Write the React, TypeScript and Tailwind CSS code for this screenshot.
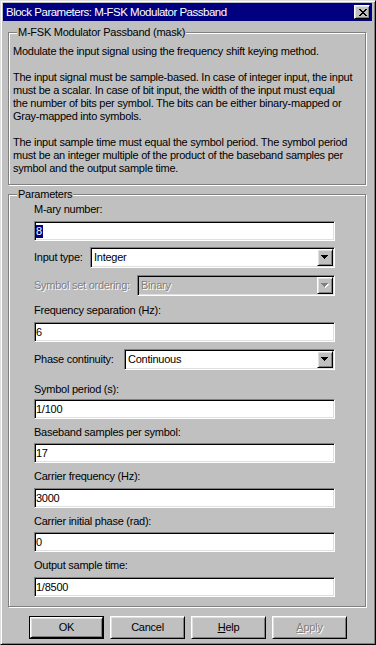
import React from 'react';

// Win classic bevels
const sunken =
  'border border-t-[#808080] border-l-[#808080] border-r-white border-b-white shadow-[inset_1px_1px_0_#000,inset_-1px_-1px_0_#dfdfdf]';
const raised =
  'border border-t-white border-l-white border-r-black border-b-black shadow-[inset_1px_1px_0_#dfdfdf,inset_-1px_-1px_0_#808080]';

const CloseGlyph = () => (
  <svg width="8" height="7" viewBox="0 0 8 7" shapeRendering="crispEdges">
    <path
      d="M0 0h2v1H0zM6 0h2v1H6zM1 1h2v1H1zM5 1h2v1H5zM2 2h4v1H2zM3 3h2v1H3zM2 4h4v1H2zM1 5h2v1H1zM5 5h2v1H5zM0 6h2v1H0zM6 6h2v1H6z"
      fill="#000"
    />
  </svg>
);

const Arrow = ({ disabled }: { disabled?: boolean }) => (
  <svg width="8" height="5" viewBox="0 0 8 5" shapeRendering="crispEdges">
    {disabled && <path d="M1 1h7v1H1zM2 2h5v1H2zM3 3h3v1H3zM4 4h1v1H4z" fill="#fff" />}
    <path d="M0 0h7v1H0zM1 1h5v1H1zM2 2h3v1H2zM3 3h1v1H3z" fill={disabled ? '#808080' : '#000'} />
  </svg>
);

const Edit = ({ value, selected }: { value: string; selected?: boolean }) => (
  <div className={`h-[20px] w-[301px] bg-white ${sunken} flex items-center pl-[1px] leading-[13px] text-black`}>
    {selected ? <span className="bg-[#000080] text-white pr-[1px]">{value}</span> : <span>{value}</span>}
  </div>
);

const Combo = ({ value, className, disabled }: { value: string; className: string; disabled?: boolean }) => (
  <div className={`h-[21px] flex p-[1px] ${sunken} ${disabled ? 'bg-[#c0c0c0]' : 'bg-white'} ${className}`}>
    <div
      className={`flex-1 flex items-center pl-[2px] leading-[13px] ${
        disabled ? 'text-[#808080] [text-shadow:1px_1px_0_#fff]' : 'text-black'
      }`}
    >
      {value}
    </div>
    <div className={`w-[16px] h-full bg-[#c0c0c0] ${raised} flex items-center justify-center`}>
      <Arrow disabled={disabled} />
    </div>
  </div>
);

const Label = ({ children, disabled }: { children: React.ReactNode; disabled?: boolean }) => (
  <div className={`leading-[13px] ${disabled ? 'text-[#808080] [text-shadow:1px_1px_0_#fff]' : 'text-black'}`}>
    {children}
  </div>
);

const GroupBox = ({
  title,
  className,
  children,
}: {
  title: string;
  className: string;
  children: React.ReactNode;
}) => (
  <div className={`relative ml-[5px] w-[358px] border border-[#808080] shadow-[inset_1px_1px_0_#fff,1px_1px_0_#fff] ${className}`}>
    <div className="absolute left-[8px] -top-[7px] px-[1px] bg-[#c0c0c0] leading-[13px] text-black">{title}</div>
    {children}
  </div>
);

const Button = ({
  children,
  isDefault,
  disabled,
}: {
  children: React.ReactNode;
  isDefault?: boolean;
  disabled?: boolean;
}) => {
  const face = (
    <div
      className={`h-full w-full bg-[#c0c0c0] ${raised} flex items-center justify-center leading-[13px] ${
        disabled ? 'text-[#808080] [text-shadow:1px_1px_0_#fff]' : 'text-black'
      }`}
    >
      {children}
    </div>
  );
  return isDefault ? (
    <div className="w-[75px] h-[23px] border border-black">{face}</div>
  ) : (
    <div className="w-[75px] h-[23px]">{face}</div>
  );
};

const App = () => {
  return (
    <div className="w-[376px] h-[645px] bg-[#c0c0c0] font-['Liberation_Sans',Arial,sans-serif] text-[11px] tracking-[-0.25px] select-none">
      <div className="w-full h-full border border-t-[#dfdfdf] border-l-[#dfdfdf] border-r-black border-b-black shadow-[inset_1px_1px_0_#fff,inset_-1px_-1px_0_#808080] pt-[2px] pl-[2px] pr-[3px]">
        {/* title bar */}
        <div className="h-[18px] bg-[#000080] flex items-center pl-[3px] pr-[2px]">
          <span className="text-white leading-[13px] text-[11.5px] tracking-[-0.5px]">
            Block Parameters: M-FSK Modulator Passband
          </span>
          <div className={`ml-auto w-[16px] h-[14px] bg-[#c0c0c0] ${raised} flex items-center justify-center pl-[1px]`}>
            <CloseGlyph />
          </div>
        </div>

        {/* description */}
        <GroupBox title="M-FSK Modulator Passband (mask)" className="mt-[11px] h-[153px] pt-[12px] pl-[4px]">
          <div className="leading-[13px] text-black whitespace-nowrap">
            <div>Modulate the input signal using the frequency shift keying method.</div>
            <div className="h-[13px]" />
            <div>
              The input signal must be sample-based. In case of integer input, the input
              <br />
              must be a scalar. In case of bit input, the width of the input must equal
              <br />
              the number of bits per symbol. The bits can be either binary-mapped or
              <br />
              Gray-mapped into symbols.
            </div>
            <div className="h-[13px]" />
            <div>
              The input sample time must equal the symbol period. The symbol period
              <br />
              must be an integer multiple of the product of the baseband samples per
              <br />
              symbol and the output sample time.
            </div>
          </div>
        </GroupBox>

        {/* parameters */}
        <GroupBox title="Parameters" className="mt-[9px] h-[413px] pt-[8px] pl-[25px]">
          <div className="flex flex-col w-[301px]">
            <Label>M-ary number:</Label>
            <div className="mt-[5px]">
              <Edit value="8" selected />
            </div>

            <div className="mt-[6px] flex items-center justify-between">
              <Label>Input type:</Label>
              <Combo value="Integer" className="w-[245px]" />
            </div>
            <div className="mt-[7px] flex items-center justify-between">
              <Label disabled>Symbol set ordering:</Label>
              <Combo value="Binary" className="w-[198px]" disabled />
            </div>

            <div className="mt-[8px]">
              <Label>Frequency separation (Hz):</Label>
            </div>
            <div className="mt-[5px]">
              <Edit value="6" />
            </div>

            <div className="mt-[7px] flex items-center justify-between">
              <Label>Phase continuity:</Label>
              <Combo value="Continuous" className="w-[211px]" />
            </div>

            <div className="mt-[13px]">
              <Label>Symbol period (s):</Label>
            </div>
            <div className="mt-[3px]">
              <Edit value="1/100" />
            </div>

            <div className="mt-[7px]">
              <Label>Baseband samples per symbol:</Label>
            </div>
            <div className="mt-[4px]">
              <Edit value="17" />
            </div>

            <div className="mt-[7px]">
              <Label>Carrier frequency (Hz):</Label>
            </div>
            <div className="mt-[5px]">
              <Edit value="3000" />
            </div>

            <div className="mt-[7px]">
              <Label>Carrier initial phase (rad):</Label>
            </div>
            <div className="mt-[4px]">
              <Edit value="0" />
            </div>

            <div className="mt-[7px]">
              <Label>Output sample time:</Label>
            </div>
            <div className="mt-[5px]">
              <Edit value="1/8500" />
            </div>
          </div>
        </GroupBox>

        {/* buttons */}
        <div className="mt-[9px] ml-[26px] flex gap-[6px]">
          <Button isDefault>OK</Button>
          <Button>Cancel</Button>
          <Button>
            <span className="underline underline-offset-[1px]">H</span>elp
          </Button>
          <Button disabled>
            <span className="underline underline-offset-[1px]">A</span>pply
          </Button>
        </div>
      </div>
    </div>
  );
};

export default App;
